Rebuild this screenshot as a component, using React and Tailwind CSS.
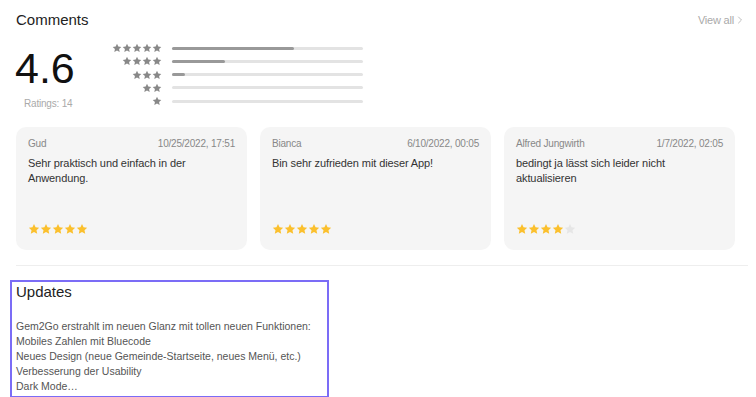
import { ChevronRight } from 'lucide-react'

const bars = [
  { stars: 5, fill: 64 },
  { stars: 4, fill: 28 },
  { stars: 3, fill: 7 },
  { stars: 2, fill: 0 },
  { stars: 1, fill: 0 },
]

const comments = [
  { name: 'Gud', date: '10/25/2022, 17:51', text: 'Sehr praktisch und einfach in der Anwendung.', rating: 5 },
  { name: 'Bianca', date: '6/10/2022, 00:05', text: 'Bin sehr zufrieden mit dieser App!', rating: 5 },
  { name: 'Alfred Jungwirth', date: '1/7/2022, 02:05', text: 'bedingt ja lässt sich leider nicht aktualisieren', rating: 4 },
]

const updates = [
  'Gem2Go erstrahlt im neuen Glanz mit tollen neuen Funktionen:',
  'Mobiles Zahlen mit Bluecode',
  'Neues Design (neue Gemeinde-Startseite, neues Menü, etc.)',
  'Verbesserung der Usability',
  'Dark Mode…',
]

function Star({ className }) {
  return (
    <svg viewBox="0 0 24 24" className={className} fill="currentColor">
      <path d="M12 1.8l3.1 6.6 7.2.9-5.3 5 1.4 7.1L12 17.9l-6.4 3.5 1.4-7.1-5.3-5 7.2-.9z" />
    </svg>
  )
}

export default function App() {
  return (
    <div className="w-[756px] h-[397px] overflow-hidden bg-white font-['Liberation_Sans',Arial,sans-serif]">
      <div className="px-4 pt-[10px]">
        <div className="flex items-center justify-between w-[730px]">
          <h2 className="text-[15px] leading-[20px] text-[#222]">Comments</h2>
          <button className="flex items-center text-[11px] text-[#aaa] tracking-[-0.2px]">
            View all
            <ChevronRight className="w-[12px] h-[12px]" strokeWidth={1.5} />
          </button>
        </div>

        <div className="flex mt-[15px]">
          <div className="w-[80px] flex flex-col">
            <span className="text-[43px] leading-[46px] text-[#111] -ml-[1px]">4.6</span>
            <span className="text-[10px] leading-[15px] text-[#aaa] ml-[8px] mt-[5px] tracking-[-0.2px]">Ratings: 14</span>
          </div>
          <div className="flex flex-col gap-[3.25px] -mt-[2px]">
            {bars.map((b) => (
              <div key={b.stars} className="flex items-center h-[10px]">
                <div className="w-[66px] flex justify-end text-[#888]">
                  {Array.from({ length: b.stars }).map((_, i) => (
                    <Star key={i} className="w-[10px] h-[10px]" />
                  ))}
                </div>
                <div className="ml-[10px] w-[191px] h-[3px] rounded-full bg-[#e3e3e3]">
                  <div className="h-full rounded-full bg-[#999]" style={{ width: `${b.fill}%` }} />
                </div>
              </div>
            ))}
          </div>
        </div>

        <div className="grid grid-cols-3 gap-[13px] w-[719px] mt-[16px]">
          {comments.map((c) => (
            <div key={c.name} className="h-[123px] rounded-[10px] bg-[#f5f5f5] px-3 pt-[11px] flex flex-col">
              <div className="flex justify-between text-[10px] leading-[12px] text-[#888] tracking-[-0.2px]">
                <span>{c.name}</span>
                <span>{c.date}</span>
              </div>
              <p className="mt-[6px] text-[11px] leading-[15px] text-[#333] tracking-[-0.1px] pr-[20px]">{c.text}</p>
              <div className="mt-auto mb-[15px] flex">
                {Array.from({ length: 5 }).map((_, i) => (
                  <Star key={i} className={`w-[12px] h-[12px] ${i < c.rating ? 'text-[#fbc02d]' : 'text-[#e6e6e6]'}`} />
                ))}
              </div>
            </div>
          ))}
        </div>

        <div className="mt-[15px] h-px w-[732px] bg-[#eeeeee]" />
      </div>

      <div className="ml-[10px] mt-[14px] w-[319px] border-2 border-[#7b6cf6] pl-[4px] pb-[2px]">
        <h3 className="text-[15px] leading-[20px] text-[#222]">Updates</h3>
        <div className="mt-[17px] text-[10.5px] leading-[15px] text-[#555]">
          {updates.map((u) => (
            <p key={u}>{u}</p>
          ))}
        </div>
      </div>
    </div>
  )
}
